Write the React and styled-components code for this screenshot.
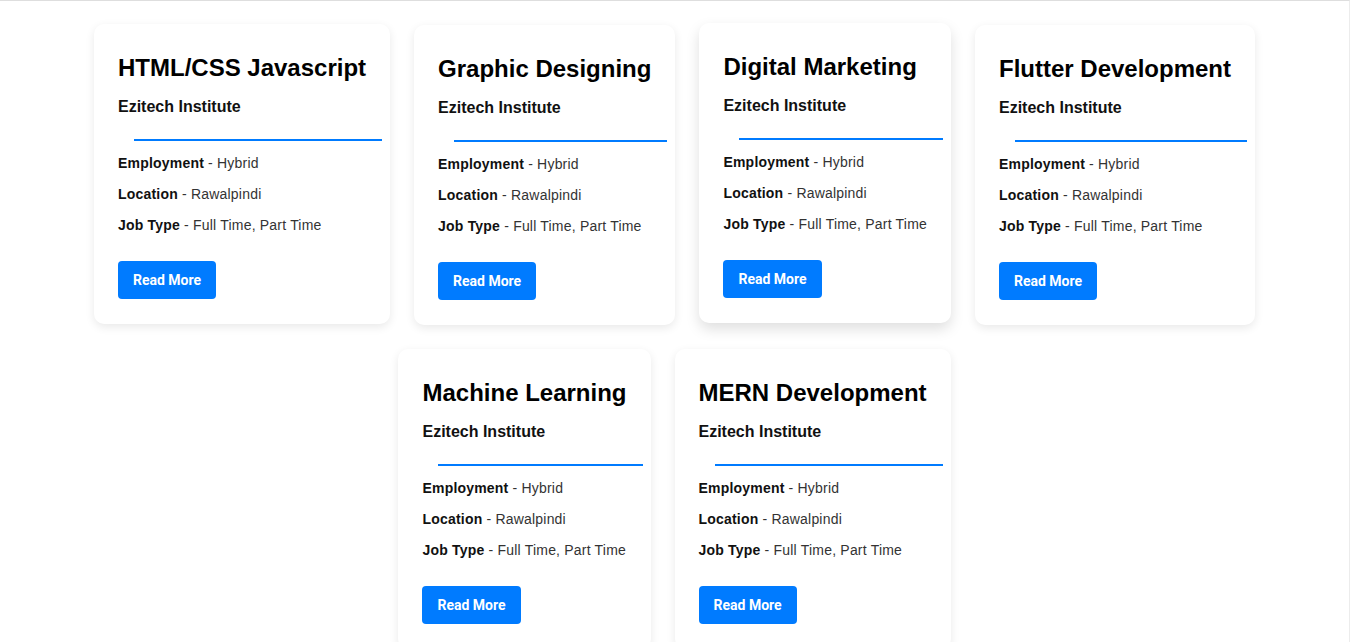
import React from 'react';
import styled, { createGlobalStyle } from "styled-components";

const GlobalStyle = createGlobalStyle`
  html, body {
    margin: 0;
    padding: 0;
    background: #fff;
  }
  body {
    font-family: "Liberation Sans", Arial, sans-serif;
    line-height: 1.5;
    color: #222;
  }
`;

const Page = styled.div`
  min-height: 100vh;
  box-sizing: border-box;
  border-top: 1px solid #dedede;
  border-right: 1px solid #ececec;
  padding: 24px 0;
`;

const Grid = styled.div`
  display: flex;
  flex-wrap: wrap;
  justify-content: center;
  align-items: flex-start;
  gap: 24px;
`;

const Card = styled.div`
  background: #fff;
  border-radius: 10px;
  padding: 25px 24px 25px;
  box-shadow: ${p => p.$raised
    ? "0 6px 14px rgba(0, 0, 0, 0.13)"
    : "0 3px 10px rgba(0, 0, 0, 0.09)"};
  transform: translateY(${p => p.$shift || 0}px);
`;

const Title = styled.h2`
  margin: 1px 0 9px;
  font-size: 24px;
  font-weight: 700;
  line-height: 36px;
  color: #000;
  white-space: nowrap;
`;

const Company = styled.h4`
  margin: 0;
  font-size: 16px;
  font-weight: 700;
  line-height: 24px;
  color: #111;
`;

const Divider = styled.div`
  margin: 20px 0 12px 16px;
  width: 100%;
  height: 2px;
  background: #007bff;
`;

const Detail = styled.p`
  margin: 0 0 10px;
  font-size: 14px;
  line-height: 21px;
  letter-spacing: 0.2px;
  color: #333;
  white-space: nowrap;
  &:last-of-type {
    margin-bottom: 0;
  }
`;

const Label = styled.strong`
  color: #111;
  font-weight: 700;
`;

const Button = styled.button`
  display: inline-block;
  margin-top: 25px;
  padding: 10px 15px;
  border: none;
  border-radius: 4px;
  background: #007bff;
  color: #fff;
  font-family: Roboto, "Liberation Sans", sans-serif;
  font-size: 14px;
  font-weight: 700;
  line-height: 18px;
  cursor: pointer;
`;

const courses = [
  { title: "HTML/CSS Javascript", shift: -1 },
  { title: "Graphic Designing", shift: 0 },
  { title: "Digital Marketing", shift: -2, raised: true },
  { title: "Flutter Development", shift: 0 },
  { title: "Machine Learning", shift: 0 },
  { title: "MERN Development", shift: 0 },
];

const CourseCard = ({ title, shift, raised }) => (
  <Card $shift={shift} $raised={raised}>
    <Title>{title}</Title>
    <Company>Ezitech Institute</Company>
    <Divider />
    <Detail><Label>Employment</Label> - Hybrid</Detail>
    <Detail><Label>Location</Label> - Rawalpindi</Detail>
    <Detail><Label>Job Type</Label> - Full Time, Part Time</Detail>
    <Button>Read More</Button>
  </Card>
);

export default function App() {
  return (
    <Page>
      <GlobalStyle />
      <Grid>
        {courses.map((c, i) => <CourseCard key={`card-${i}`} {...c} />)}
      </Grid>
    </Page>
  );
}
